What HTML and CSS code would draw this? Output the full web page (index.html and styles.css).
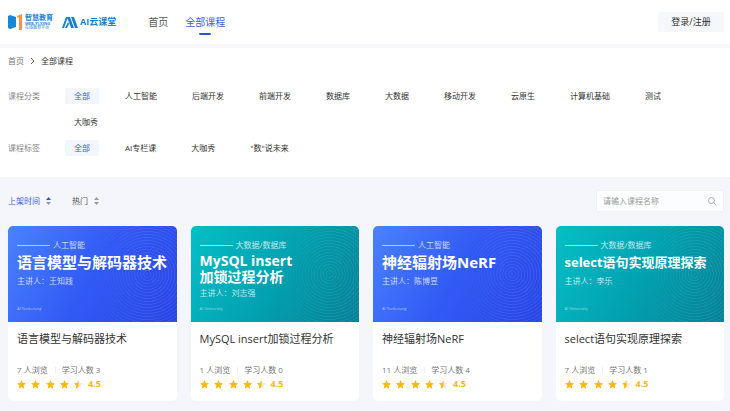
FILE: index.html
```html
<!DOCTYPE html>
<html lang="zh-CN">

<head>
    <meta charset="UTF-8">
    <meta name="viewport" content="width=device-width, initial-scale=1.0">
    <title>全部课程</title>
    <link rel="stylesheet" href="styles.css">
</head>

<body>
    <header class="header">
        <a href="#" class="logo">
            <svg class="logo-book" viewBox="0 0 15 16">
                <path d="M0 2l2-1v14l-2-1z" fill="#1686d9" />
                <path d="M2 1l6 2v10l-6 2z" fill="#1686d9" />
                <path d="M9 2l5-2v16h-3V3L9 4z" fill="#f5914b" />
            </svg>
            <span class="logo-text">
                <b>智慧教育</b>
                <i>WEB-YI.XING</i>
                <small>在线教育平台</small>
            </span>
        </a>
        <a href="#" class="brand">
            <svg class="brand-icon" viewBox="0 0 16 11">
                <path d="M0 11L4 0h2L2 11zM5 0h3l4 11H9zM3 11L6 5l1 2-2 4zM9 0h3l4 11h-3z" fill="#1b7fd0" />
            </svg>
            <span>AI云课堂</span>
        </a>
        <nav class="nav">
            <a href="#">首页</a>
            <a href="#" class="active">全部课程</a>
        </nav>
        <button type="button" class="login">登录/注册</button>
    </header>

    <section class="filters">
        <div class="crumbs">
            <a href="#">首页</a>
            <svg viewBox="0 0 5 8"><path d="M1 1l3 3-3 3" fill="none" stroke="#666" /></svg>
            <span>全部课程</span>
        </div>
        <div class="filter">
            <span class="filter-name">课程分类</span>
            <div class="options">
                <button type="button" class="on">全部</button>
                <button type="button">人工智能</button>
                <button type="button">后端开发</button>
                <button type="button">前端开发</button>
                <button type="button">数据库</button>
                <button type="button">大数据</button>
                <button type="button">移动开发</button>
                <button type="button">云原生</button>
                <button type="button">计算机基础</button>
                <button type="button">测试</button>
                <button type="button">大咖秀</button>
            </div>
        </div>
        <div class="filter">
            <span class="filter-name">课程标签</span>
            <div class="options">
                <button type="button" class="on">全部</button>
                <button type="button">AI专栏课</button>
                <button type="button">大咖秀</button>
                <button type="button">"数"说未来</button>
            </div>
        </div>
    </section>

    <main class="main">
        <div class="toolbar">
            <button type="button" class="sort active">上架时间
                <svg viewBox="0 0 5 8"><path class="up" d="M0 3l2.500-3L5 3z" /><path d="M0 5h5L2.500 8z" /></svg>
            </button>
            <button type="button" class="sort">热门
                <svg viewBox="0 0 5 8"><path class="up" d="M0 3l2.500-3L5 3z" /><path d="M0 5h5L2.500 8z" /></svg>
            </button>
            <label class="search">
                <input type="text" placeholder="请输入课程名称" aria-label="请输入课程名称">
                <svg viewBox="0 0 8 8"><circle cx="3.500" cy="3.500" r="3" /><path d="M5.700 5.700L7.700 7.700" /></svg>
            </label>
        </div>

        <div class="cards">
            <a href="#" class="card">
                <div class="cover blue">
                    <p class="kind">人工智能</p>
                    <h2>语言模型与解码器技术</h2>
                    <p>主讲人：王知践</p>
                    <small>AI Yunketang</small>
                </div>
                <div class="info">
                    <h3>语言模型与解码器技术</h3>
                    <p class="meta"><span>7 人浏览</span><span>学习人数 3</span></p>
                    <p class="score"><svg class="stars" viewBox="0 0 67 9"><use href="#stars" /></svg>4.5</p>
                </div>
            </a>
            <a href="#" class="card">
                <div class="cover teal">
                    <p class="kind">大数据/数据库</p>
                    <h2 class="two"><span>MySQL insert</span><span>加锁过程分析</span></h2>
                    <p>主讲人：刘志强</p>
                    <small>AI University</small>
                </div>
                <div class="info">
                    <h3>MySQL insert加锁过程分析</h3>
                    <p class="meta"><span>1 人浏览</span><span>学习人数 0</span></p>
                    <p class="score"><svg class="stars" viewBox="0 0 67 9"><use href="#stars" /></svg>4.5</p>
                </div>
            </a>
            <a href="#" class="card">
                <div class="cover blue">
                    <p class="kind">人工智能</p>
                    <h2>神经辐射场NeRF</h2>
                    <p>主讲人：陈博昱</p>
                    <small>AI Yunketang</small>
                </div>
                <div class="info">
                    <h3>神经辐射场NeRF</h3>
                    <p class="meta"><span>11 人浏览</span><span>学习人数 4</span></p>
                    <p class="score"><svg class="stars" viewBox="0 0 67 9"><use href="#stars" /></svg>4.5</p>
                </div>
            </a>
            <a href="#" class="card">
                <div class="cover teal">
                    <p class="kind">大数据/数据库</p>
                    <h2 class="small">select语句实现原理探索</h2>
                    <p>主讲人：李乐</p>
                    <small>AI University</small>
                </div>
                <div class="info">
                    <h3>select语句实现原理探索</h3>
                    <p class="meta"><span>7 人浏览</span><span>学习人数 1</span></p>
                    <p class="score"><svg class="stars" viewBox="0 0 67 9"><use href="#stars" /></svg>4.5</p>
                </div>
            </a>
        </div>
    </main>

    <!-- 星级评分图标 -->
    <svg class="defs" width="0" height="0">
        <defs>
            <path id="star" d="M4.500 0l1.300 2.900 3.200.4-2.400 2.200.7 3.200-2.800-1.600-2.800 1.600.7-3.200L0 3.300l3.200-.4z" />
            <g id="stars">
                <use href="#star" fill="#f7ba0b" />
                <use href="#star" x="14" fill="#f7ba0b" />
                <use href="#star" x="29" fill="#f7ba0b" />
                <use href="#star" x="43" fill="#f7ba0b" />
                <use href="#star" x="57" fill="#e8eaee" />
                <path d="M61.500 0v7.100l-2.800 1.600.7-3.200L57 3.300l3.200-.4z" fill="#f7ba0b" />
            </g>
        </defs>
    </svg>
</body>

</html>
```
FILE: styles.css
```css
* {
    box-sizing: border-box;
}

body {
    margin: 0;
    min-height: 100vh;
    display: flex;
    flex-direction: column;
    font-family: "Open Sans", "Noto Sans CJK SC", sans-serif;
    font-size: 8px;
    line-height: 16px;
    color: #333;
    background-color: #f4f6fb;
}

a {
    color: inherit;
    text-decoration: none;
}

button {
    padding: 0;
    border: none;
    background: none;
    font: inherit;
    color: inherit;
    cursor: pointer;
}

h2, h3, p {
    margin: 0;
}

.header {
    display: flex;
    align-items: center;
    height: 48px;
    padding: 0 6px 0 8px;
    background-color: #fff;
    border-bottom: 4px solid #f8f8fa;
}

.logo {
    display: flex;
    gap: 2px;
    width: 54px;
    color: #1686d9;
}

.logo-book {
    width: 15px;
    height: 16px;
}

.logo-text {
    display: flex;
    flex-direction: column;
    white-space: nowrap;
}

.logo-text b {
    font-size: 7px;
    line-height: 8px;
}

.logo-text i {
    font-size: 4px;
    font-style: normal;
    font-weight: bold;
    line-height: 4px;
}

.logo-text small {
    font-size: 4px;
    line-height: 4px;
}

.brand {
    display: flex;
    align-items: center;
    gap: 2px;
    color: #1b7fd0;
    font-size: 9px;
    font-weight: bold;
}

.brand-icon {
    width: 16px;
    height: 11px;
}

.nav {
    display: flex;
    gap: 17px;
    margin-left: 32px;
    font-size: 10px;
    line-height: 14px;
    color: #555;
}

.nav a {
    position: relative;
}

.nav .active {
    color: #3a62e8;
}

.nav .active::after {
    content: "";
    position: absolute;
    left: 50%;
    bottom: -6px;
    width: 12px;
    height: 2px;
    margin-left: -6px;
    border-radius: 1px;
    background-color: #2c56d8;
}

.login {
    width: 66px;
    height: 20px;
    margin-left: auto;
    border-radius: 2px;
    background-color: #f5f7fb;
    font-size: 9px;
}

.filters {
    padding: 5px 8px 21px;
    background-color: #fff;
}

.crumbs {
    display: flex;
    align-items: center;
    gap: 6px;
    margin-bottom: 19px;
}

.crumbs a {
    color: #777;
}

.crumbs svg {
    width: 5px;
    height: 8px;
}

.filter {
    display: flex;
    margin-bottom: 10px;
}

.filter:last-child {
    margin-bottom: 0;
}

.filter-name {
    flex: none;
    width: 57px;
    color: #888;
}

.options {
    display: flex;
    flex-wrap: wrap;
    gap: 10px 17px;
}

.options button {
    padding: 0 9px;
    border-radius: 2px;
}

.options .on {
    background-color: #f3f6fc;
    color: #3a62e8;
}

.main {
    padding: 13px 6px 10px 8px;
}

.toolbar {
    display: flex;
    align-items: center;
    gap: 21px;
    margin-bottom: 14px;
}

.sort {
    display: flex;
    align-items: center;
    gap: 6px;
    color: #555;
}

.sort svg {
    width: 5px;
    height: 8px;
    fill: #999;
}

.sort.active {
    color: #3a62e8;
}

.sort.active .up {
    fill: #2c56d8;
}

.search {
    display: flex;
    align-items: center;
    width: 128px;
    height: 22px;
    margin-left: auto;
    padding: 0 7px 0 6px;
    border: 1px solid #eff1f5;
    border-radius: 2px;
    background-color: #fcfdfe;
}

.search input {
    flex: 1;
    min-width: 0;
    padding: 0;
    border: none;
    outline: none;
    background: none;
    font: inherit;
}

.search input::placeholder {
    color: #999;
}

.search svg {
    width: 8px;
    height: 8px;
    fill: none;
    stroke: #aaa;
}

.cards {
    display: grid;
    grid-template-columns: repeat(4, 1fr);
    gap: 14px;
}

.card {
    overflow: hidden;
    border-radius: 5px;
    background-color: #fff;
}

.cover {
    position: relative;
    display: flex;
    flex-direction: column;
    height: 96px;
    padding: 11px 0 10px 9px;
    color: rgba(255, 255, 255, 0.75);
    white-space: nowrap;
}

.blue {
    background: linear-gradient(120deg, #4b82fc, #315af5 50%, #2945e5);
}

.teal {
    background: linear-gradient(120deg, #05bfc5, #02a2b1 50%, #058198);
}

/* 右侧波纹 */
.cover::before {
    content: "";
    position: absolute;
    top: 0;
    right: 0;
    bottom: 0;
    width: 50%;
    background: repeating-radial-gradient(circle at 65% 50%, rgba(255, 255, 255, 0.07) 0 1px, transparent 1px 3px);
    -webkit-mask-image: linear-gradient(to right, transparent, #000 60%);
    mask-image: linear-gradient(to right, transparent, #000 60%);
}

.kind {
    display: flex;
    align-items: center;
    gap: 3px;
}

.kind::before {
    content: "";
    width: 33px;
    height: 1px;
    background-color: rgba(255, 255, 255, 0.6);
}

.cover h2 {
    position: relative;
    margin-bottom: 2px;
    font-size: 15px;
    line-height: 18px;
    color: #fff;
}

.cover .two {
    display: flex;
    flex-direction: column;
    margin-bottom: 0;
    font-size: 14px;
    line-height: 16px;
}

.cover .small {
    font-size: 13px;
}

.cover small {
    margin-top: auto;
    font-size: 4px;
    line-height: 6px;
    color: rgba(255, 255, 255, 0.6);
}

.info {
    padding: 8px 9px 11px;
}

.info h3 {
    margin-bottom: 14px;
    font-size: 11px;
    font-weight: normal;
    line-height: 18px;
    white-space: nowrap;
}

.meta {
    display: flex;
    color: #777;
}

.meta span + span {
    margin-left: 7px;
    padding-left: 7px;
    background: linear-gradient(#eee, #eee) left center / 1px 6px no-repeat;
}

.score {
    display: flex;
    align-items: center;
    gap: 4px;
    font-size: 9px;
    font-weight: bold;
    line-height: 12px;
    color: #f7ba0b;
}

.stars {
    width: 67px;
    height: 9px;
}

.defs {
    position: absolute;
}
```
